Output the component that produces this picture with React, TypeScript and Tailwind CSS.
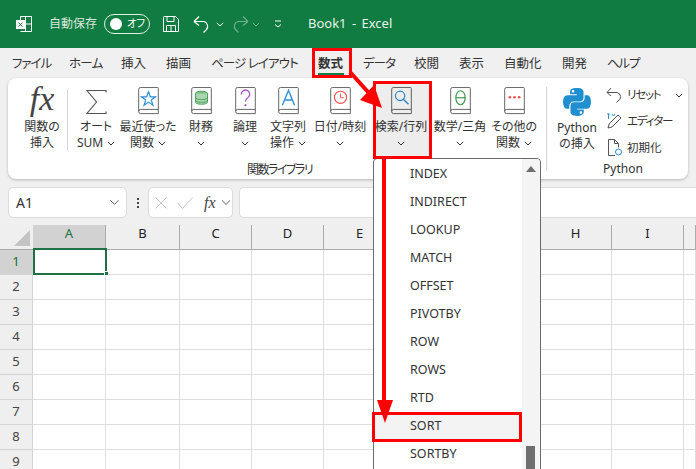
import React from 'react';
import { ChevronDown } from 'lucide-react';
import { FaPython } from 'react-icons/fa6';

const FONT = "[font-family:'Noto_Sans','Noto_Sans_CJK_JP',sans-serif] [font-feature-settings:'palt']";

const TABS = [
  { label: 'ファイル', w: 'w-[38px] tracking-[-1px]' },
  { label: 'ホーム', w: 'w-[33px] tracking-[-0.7px]' },
  { label: '挿入', w: 'w-[26px]' },
  { label: '描画', w: 'w-[26px]' },
  { label: 'ページ レイアウト', w: 'w-[88px] tracking-[-0.9px]' },
  { label: '数式', w: 'w-[26px]', active: true },
  { label: 'データ', w: 'w-[32px] tracking-[-1px]' },
  { label: '校閲', w: 'w-[26px]' },
  { label: '表示', w: 'w-[26px]' },
  { label: '自動化', w: 'w-[39px]' },
  { label: '開発', w: 'w-[26px]' },
  { label: 'ヘルプ', w: 'w-[32px] tracking-[-1.200px]' },
];

const FUNCTIONS = ['INDEX', 'INDIRECT', 'LOOKUP', 'MATCH', 'OFFSET', 'PIVOTBY', 'ROW', 'ROWS', 'RTD', 'SORT', 'SORTBY'];
// F and G sit behind the dropdown, so their letters are left out
const COLUMNS = [
  { n: 'A', w: 'w-[73px]' },
  { n: 'B', w: 'w-[74px]' },
  { n: 'C', w: 'w-[72px]' },
  { n: 'D', w: 'w-[72px]' },
  { n: 'E', w: 'w-[72px]' },
  { n: '', w: 'w-[72px]' },
  { n: '', w: 'w-[72px]' },
  { n: 'H', w: 'w-[72px]' },
  { n: 'I', w: 'w-[72px]' },
  { n: '', w: 'w-[12px]' },
];
const ROWS = [1, 2, 3, 4, 5, 6, 7, 8, 9];

function Chev({ className = '' }: { className?: string }) {
  return (
    <svg width="8" height="5" viewBox="0 0 8 5" className={className} fill="none" stroke="currentColor" strokeWidth="1">
      <path d="M.8.8 4 4l3.2-3.2" />
    </svg>
  );
}

function Book({ children }: { children?: React.ReactNode }) {
  return (
    <svg width="21" height="28" viewBox="0 0 22 30" fill="none">
      <path d="M2.5.5h18a1 1 0 0 1 1 1v27h-19a2 2 0 0 1-2-2v-24a2 2 0 0 1 2-2Z" fill="#fff" stroke="#5a5a5a" />
      <path d="M.5 26a2 2 0 0 1 2-2h19" stroke="#5a5a5a" />
      {children}
    </svg>
  );
}

function RibbonBtn({ w, lines, chevInline, icon }: { w: string; lines: string[]; chevInline?: boolean; icon: React.ReactNode }) {
  return (
    <div className={`${w} flex flex-col items-center shrink-0`}>
      <div className="h-[31px] flex items-end justify-center">{icon}</div>
      <div className="mt-[4px] text-[12px] leading-[16px] text-[#333] text-center whitespace-nowrap">{lines[0]}</div>
      <div className="h-[16px] text-[12px] leading-[16px] text-[#333] flex items-center gap-[4px] whitespace-nowrap">
        {lines[1]}
        {(chevInline || !lines[1]) && <Chev />}
      </div>
    </div>
  );
}

export default function App() {
  return (
    <div className={`relative w-[696px] h-[469px] overflow-hidden bg-[#f0f0f0] ${FONT}`}>
      {/* title bar */}
      <div className="h-[48px] bg-[#107c41] flex items-center text-white text-[12px]">
        <svg width="16" height="16" viewBox="0 0 16 16" className="ml-[16px]" fill="none" stroke="#fff">
          <path d="M4.5.5h11v15h-11M9.5.5v15M9.5 8h6M4.5 4V.5" />
          <rect x="0.5" y="4.5" width="8" height="8" fill="#fff" />
          <path d="m2.6 6.6 3.8 4M6.4 6.6l-3.8 4" stroke="#107c41" />
        </svg>
        <span className="ml-[17px] w-[48px] text-[#d8e8df] whitespace-nowrap">自動保存</span>
        <div className="ml-[7px] w-[46px] h-[20px] border border-[#e6f0ea] rounded-full flex items-center pl-[5px] gap-[5px]">
          <div className="w-[12px] h-[12px] rounded-full bg-white" />
          <span className="text-[10.500px] tracking-[-0.5px]">オフ</span>
        </div>
        <svg width="16" height="16" viewBox="0 0 16 16" className="ml-[13px]" fill="none" stroke="#fff">
          <path d="M1.5.5h11l3 3v12h-15v-14a1 1 0 0 1 1-1ZM4 .5v5h7v-5M3.500 15.500v-6h9v6M8 10v5.500" />
        </svg>
        <svg width="20" height="18" viewBox="0 0 20 18" className="ml-[14px]" fill="none" stroke="#fff" strokeWidth="1.2">
          <path d="M1 6.500h10a5 5 0 0 1 2.500 8l-3 3M1 6.500 6 1.500M1 6.500l5 4" />
        </svg>
        <Chev className="ml-[3px] text-white" />
        <svg width="20" height="18" viewBox="0 0 20 18" className="ml-[5px]" fill="none" stroke="#6fae8c" strokeWidth="1.2">
          <path d="M19 6.500H9a5 5 0 0 0-2.500 8l3 3M19 6.500l-5-5M19 6.500l-5 4" />
        </svg>
        <Chev className="ml-[3px] text-[#6fae8c]" />
        <svg width="8" height="8" viewBox="0 0 8 8" className="ml-[14px]" fill="none" stroke="#fff">
          <path d="M1 1h6M1 4.500l3 2.500 3-2.500" />
        </svg>
        <span className="ml-[26px] text-[13px] text-[#e8f2ec] [word-spacing:2px]">Book1 - Excel</span>
      </div>

      {/* tabs */}
      <div className="h-[30px] pl-[12px] flex gap-[19px] items-center text-[12.500px] text-[#333]">
        {TABS.map((t) => (
          <div key={t.label} className={`${t.w} relative h-[30px] leading-[31px] whitespace-nowrap ${t.active ? 'font-bold' : ''}`}>
            <span>{t.label}</span>
            {t.active && <div className="absolute left-0 right-0 bottom-[3px] h-[2px] bg-[#107c41]" />}
          </div>
        ))}
      </div>

      {/* ribbon */}
      <div className="mx-[8px] h-[101px] bg-white rounded-[8px] shadow-[0_1px_3px_rgba(0,0,0,0.25)] flex items-start pt-[6px]">
        <RibbonBtn
          w="w-[50px] ml-[9px]"
          lines={['関数の', '挿入']}
          icon={<span className="[font-family:'Liberation_Serif',serif] italic text-[34px] leading-[32px] text-[#444]">fx</span>}
        />
        <div className="w-px h-[62px] bg-[#d4d4d4] mt-[5px] shrink-0" />
        <RibbonBtn
          w="w-[56px]"
          lines={['オート', 'SUM']}
          chevInline
          icon={
            <svg width="21" height="26" viewBox="0 0 22 26" fill="none" stroke="#555" strokeWidth="1.200">
              <path d="M21 3V1H1l10 12L1 25h20v-2" />
            </svg>
          }
        />
        <RibbonBtn
          w="w-[48px]"
          lines={['最近使った', '関数']}
          chevInline
          icon={
            <Book>
              <path d="m11 5 2 5.500h5.500l-4.500 3.500 1.800 5.500-4.800-3.300-4.800 3.300L8 14 3.500 10.500H9Z" stroke="#2b8fd8" strokeWidth="1.300" />
            </Book>
          }
        />
        <RibbonBtn
          w="w-[58px]"
          lines={['財務', '']}
          icon={
            <Book>
              <ellipse cx="11" cy="7" rx="6.500" ry="2.500" fill="#7dbb87" stroke="#3f9a52" />
              <path d="M4.500 7v9c0 1.500 3 2.500 6.500 2.500s6.500-1 6.500-2.500V7M4.500 11c0 1.500 3 2.500 6.500 2.500s6.500-1 6.500-2.500M4.500 14c0 1.500 3 2.500 6.500 2.500s6.500-1 6.500-2.500" fill="#a9d6b0" stroke="#3f9a52" />
            </Book>
          }
        />
        <RibbonBtn
          w="w-[30px]"
          lines={['論理', '']}
          icon={
            <Book>
              <path d="M6.500 8a4.500 4.500 0 1 1 7 3.500c-1.700 1.200-2.500 2-2.500 4" stroke="#a855c8" strokeWidth="1.500" />
              <circle cx="11" cy="19.500" r="1.200" fill="#a855c8" />
            </Book>
          }
        />
        <RibbonBtn
          w="w-[56px]"
          lines={['文字列', '操作']}
          chevInline
          icon={
            <Book>
              <path d="m4.500 19.500 6.500-16 6.500 16M6.800 14h8.400" stroke="#2b8fd8" strokeWidth="1.500" />
            </Book>
          }
        />
        <RibbonBtn
          w="w-[48px]"
          lines={['日付/時刻', '']}
          icon={
            <Book>
              <circle cx="11" cy="11" r="6.500" stroke="#ef4c4c" strokeWidth="1.200" />
              <path d="M11 7v4.500h3.500" stroke="#ef4c4c" />
            </Book>
          }
        />
        <RibbonBtn
          w="w-[74px]"
          lines={['検索/行列', '']}
          icon={
            <Book>
              <circle cx="9.500" cy="9.500" r="5" stroke="#2b8fd8" strokeWidth="1.300" />
              <path d="m13 13 5.500 5.500" stroke="#2b8fd8" strokeWidth="1.500" />
            </Book>
          }
        />
        <RibbonBtn
          w="w-[44px]"
          lines={['数学/三角', '']}
          icon={
            <Book>
              <ellipse cx="11" cy="11.500" rx="5" ry="7.500" stroke="#3f9a52" strokeWidth="1.300" />
              <path d="M6 11.500h10" stroke="#3f9a52" strokeWidth="1.300" />
            </Book>
          }
        />
        <RibbonBtn
          w="w-[64px]"
          lines={['その他の', '関数']}
          chevInline
          icon={
            <Book>
              <circle cx="6" cy="11" r="1.400" fill="#ef4c4c" />
              <circle cx="11" cy="11" r="1.400" fill="#ef4c4c" />
              <circle cx="16" cy="11" r="1.400" fill="#ef4c4c" />
            </Book>
          }
        />
      </div>

      {/* formula bar */}
      <div className="h-[31px] mt-[8px] pl-[8px] flex items-center">
        <div className="w-[119px] h-[31px] bg-white border border-[#dcdcdc] rounded-[5px] flex items-center pl-[7px] pr-[4px] justify-between text-[14px] text-[#333]">
          A1
          <ChevronDown size={15} strokeWidth={1.300} />
        </div>
        <div className="w-[21px] flex flex-col items-center gap-[2px]">
          <div className="w-[2px] h-[2px] bg-[#444]" />
          <div className="w-[2px] h-[2px] bg-[#444]" />
          <div className="w-[2px] h-[2px] bg-[#444]" />
        </div>
        <div className="w-[85px] h-[31px] bg-white border border-[#dcdcdc] rounded-[5px] flex items-center pl-[6px] gap-[10px]">
          <svg width="12" height="12" viewBox="0 0 12 12" fill="none" stroke="#c8c8c8"><path d="m.5.5 11 11M11.500.5l-11 11" /></svg>
          <svg width="16" height="12" viewBox="0 0 16 12" fill="none" stroke="#c8c8c8"><path d="m.5 6 5 5.500 10-11" /></svg>
          <span className="[font-family:'Liberation_Serif',serif] italic text-[16px] text-[#444] ml-[1px] flex items-center gap-[6px]">
            fx
            <Chev className="text-[#999] scale-125" />
          </span>
        </div>
        <div className="ml-[6px] flex-1 h-[31px] bg-white border border-[#dcdcdc] rounded-l-[5px] border-r-0" />
      </div>

      {/* sheet */}
      <div className="mt-[7px] bg-white">
        <div className="flex h-[24px] bg-[#efefef]">
          <div className="w-[33px] flex items-end justify-end pr-[3px] pb-[3px]">
            <div className="w-[16px] h-[16px] bg-[#c4c4c4] [clip-path:polygon(100%_0,100%_100%,0_100%)]" />
          </div>
          {COLUMNS.map((c, i) => (
            <div
              key={i}
              className={`${c.w} relative flex items-center justify-center text-[13px] pb-[6px] ${c.n === 'A' ? 'bg-[#d2d2d2] text-[#1f6f43]' : 'text-[#222]'} border-r border-[#ababab]`}
            >
              {c.n}
            </div>
          ))}
        </div>
        <div className="h-px bg-[#ababab]" />
        {ROWS.map((r) => (
          <div key={r} className="flex h-[25px]">
            <div className={`w-[33px] flex items-center justify-center text-[13px] border-r border-b border-[#d4d4d4] ${r === 1 ? 'bg-[#d2d2d2] text-[#1f6f43]' : 'bg-[#efefef] text-[#444]'}`}>
              {r}
            </div>
            {COLUMNS.map((c, i) => (
              <div key={i} className={`${c.w} border-r border-b border-[#dedede]`} />
            ))}
          </div>
        ))}
      </div>

      {/* selected cell */}
      <div className="absolute left-[33px] top-[248px] w-[74px] h-[27px] border-2 border-[#1f7145]" />
      <div className="absolute left-[104px] top-[271px] w-[5px] h-[5px] bg-[#1f7145] border border-white" />

      {/* right side of the ribbon */}
      <div className="absolute left-[546px] top-[87px] w-px h-[84px] bg-[#d4d4d4]" />
      <div className="absolute left-[556px] top-[86px] w-[42px] flex flex-col items-center text-[12px] leading-[16px] text-[#333] whitespace-nowrap">
        <FaPython size={32} color="#1f8fd0" />
        <span className="mt-[2px]">Python</span>
        <span>の挿入</span>
      </div>
      <div className="absolute left-[606px] top-[82px] flex flex-col text-[11.500px] text-[#333] whitespace-nowrap">
        <div className="h-[26px] flex items-center gap-[3px]">
          <svg width="18" height="16" viewBox="0 0 18 16" fill="none" stroke="#555"><path d="M1 5.500h10a4.500 4.500 0 0 1 1 8.500l-1.500 1.500M1 5.500 5 1M1 5.500l4 3.500" /></svg>
          <span className="tracking-[-1.200px]">リセット</span>
          <Chev className="ml-[12px]" />
        </div>
        <div className="h-[26px] flex items-center gap-[3px]">
          <svg width="18" height="16" viewBox="0 0 18 16" fill="none" stroke="#555"><path d="m2 15 1-4 9-9 3 3-9 9Z" /><path d="M1 1h3M2.500 1v5M6 1l1.500 2L9 1" stroke="#2b8fd8" /></svg>
          <span className="tracking-[-1.200px]">エディター</span>
        </div>
        <div className="h-[27px] flex items-center gap-[3px]">
          <svg width="18" height="18" viewBox="0 0 18 18" fill="none" stroke="#555"><path d="M9 16.500H2.500v-16h6l4 4v4M8.500.5v4h4" /><circle cx="12.500" cy="13" r="3" stroke="#2b8fd8" /></svg>
          初期化
        </div>
      </div>

      <div className="absolute left-[247px] top-[161px] text-[12px] leading-[18px] text-[#333] tracking-[-1.500px]">関数ライブラリ</div>
      <div className="absolute left-[603px] top-[160px] text-[12px] leading-[18px] text-[#333]">Python</div>

      {/* dropdown */}
      <div className="absolute left-[373px] top-[158px] w-[168px] h-[320px] bg-white border border-[#6b6b6b] rounded-t-[4px] flex">
        <div className="w-[148px] pt-[1px]">
          {FUNCTIONS.map((f) => (
            <div key={f} className={`h-[28px] pl-[36px] flex items-center text-[12.500px] text-[#333] ${f === 'SORT' ? 'bg-[#f3f3f3]' : ''}`}>
              {f}
            </div>
          ))}
        </div>
        <div className="relative w-[18px] bg-[#f4f4f4] rounded-tr-[4px]">
          <div className="absolute left-[4px] top-[7px] w-0 h-0 border-l-[5px] border-r-[5px] border-b-[6px] border-l-transparent border-r-transparent border-b-[#6e6e6e]" />
          <div className="absolute left-[4px] top-[287px] w-[9px] h-[40px] bg-[#6e6e6e]" />
        </div>
      </div>

      {/* red callouts */}
      <div className="absolute left-[312px] top-[48px] w-[40px] h-[30px] border-[3px] border-[#ff0000]" />
      <div className="absolute left-[373px] top-[81px] w-[59px] h-[78px] border-[3px] border-[#ff0000] bg-[#000]/[0.07]" />
      <div className="absolute left-[372px] top-[412px] w-[150px] h-[30px] border-[3px] border-[#ff0000]" />
      <svg className="absolute left-0 top-0 pointer-events-none" width="696" height="469" fill="none">
        <path d="M350 72 368 92" stroke="#ff0000" strokeWidth="4" />
        <path d="M382 108 360 100 374 85Z" fill="#ff0000" />
        <path d="M384 158V402" stroke="#ff0000" strokeWidth="4" />
        <path d="M377 400H393L385 423Z" fill="#ff0000" />
      </svg>
    </div>
  );
}
